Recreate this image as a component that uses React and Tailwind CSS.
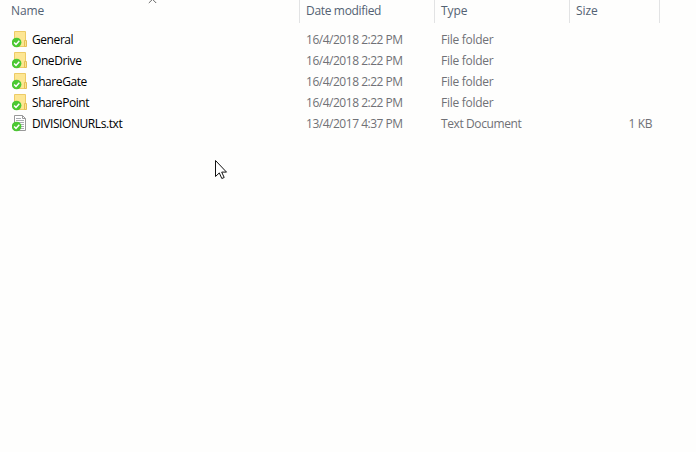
import React from 'react';

const columns = [
  { label: 'Name', width: 'w-[300px] pl-[11px]', sorted: true },
  { label: 'Date modified', width: 'w-[135px] pl-1.5' },
  { label: 'Type', width: 'w-[135px] pl-1.5' },
  { label: 'Size', width: 'w-[90px] pl-1.5' }
];

const files = [
  { name: 'General', date: '16/4/2018 2:22 PM', type: 'File folder', folder: true },
  { name: 'OneDrive', date: '16/4/2018 2:22 PM', type: 'File folder', folder: true },
  { name: 'ShareGate', date: '16/4/2018 2:22 PM', type: 'File folder', folder: true },
  { name: 'SharePoint', date: '16/4/2018 2:22 PM', type: 'File folder', folder: true },
  { name: 'DIVISIONURLs.txt', date: '13/4/2017 4:37 PM', type: 'Text Document', size: '1 KB' }
];

// Green check shown on items that are synced
const SyncBadge = () => (
  <g>
    <circle cx="4.6" cy="11.5" r="4.8" fill="#4bc832" />
    <path d="M2.1 11.5l1.9 1.9 3.3-3.7" fill="none" stroke="#fff" strokeWidth="1.5" />
  </g>
);

const FolderIcon = () => (
  <svg width="16" height="17" viewBox="0 0 16 17" className="shrink-0">
    <path d="M2.5.5h11v15h-11z" fill="#fde693" stroke="#edcb66" />
    <path d="M12.5 9.5h2v6h-2z" fill="#fbe391" stroke="#e5bf55" />
    <SyncBadge />
  </svg>
);

const TextIcon = () => (
  <svg width="16" height="17" viewBox="0 0 16 17" className="shrink-0">
    <path d="M2.5.5h8l3 3v12h-11z" fill="#fff" stroke="#999" />
    <path d="M10.5.5v3h3" fill="none" stroke="#999" />
    <path d="M4 3.5h5M4 5.5h8M4 7.5h8M7 9.5h5M8 11.5h4M8 13.5h4" stroke="#a8acb0" />
    <SyncBadge />
  </svg>
);

const App = () => {
  return (
    <div className="relative h-[452px] w-[696px] overflow-hidden bg-[#fefefd] font-['Open_Sans','Noto_Sans',sans-serif] text-[12px] leading-[21px] text-[#707176]">
      <div className="flex h-[23px] text-[#536273]">
        {columns.map(col => (
          <div key={col.label} className={`relative border-r border-[#e2e3e4] ${col.width}`}>
            {col.sorted && (
              <svg width="9" height="4" viewBox="0 0 9 4" className="absolute left-[148px] top-0">
                <path d="M.8 3L4.5-.7 8.2 3" fill="none" stroke="#666" />
              </svg>
            )}
            <span className={col.label === 'Date modified' ? 'block tracking-[-0.33px]' : 'block tracking-[-0.1px]'}>
              {col.label}
            </span>
          </div>
        ))}
      </div>

      <div className="pt-[6px]">
        {files.map(file => (
          <div key={file.name} className="flex h-[21px] whitespace-nowrap">
            <div className="flex w-[300px] pl-3 pt-0.5 text-black">
              {file.folder ? <FolderIcon /> : <TextIcon />}
              <span className="-mt-0.5 pl-1 tracking-[-0.42px]">{file.name}</span>
            </div>
            <div className="w-[135px] pl-1.5 tracking-[-0.48px]">{file.date}</div>
            <div className={file.folder ? 'w-[135px] pl-1.5 tracking-[-0.28px]' : 'w-[135px] pl-1.5 tracking-[-0.4px]'}>
              {file.type}
            </div>
            <div className="w-[82px] text-right tracking-[-0.4px]">{file.size}</div>
          </div>
        ))}
      </div>

      {/* mouse pointer */}
      <svg width="13" height="20" viewBox="0 0 13 20" className="absolute left-[215px] top-[160px]">
        <path d="M.5.5v16l3.8-3.6 2.5 5.6 2.4-1-2.5-5.4h4.8z" fill="#fff" stroke="#111" />
      </svg>
    </div>
  );
};

export default App;
